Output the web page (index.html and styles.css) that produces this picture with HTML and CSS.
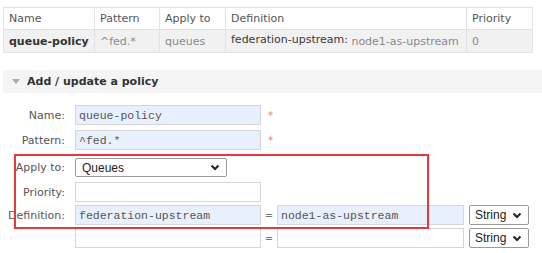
FILE: index.html
```html
<!DOCTYPE html>
<html lang="en">
<head>
  <meta charset="UTF-8" />
  <title>Policies</title>
  <link rel="stylesheet" href="styles.css">
</head>
<body>
  <table class="list">
    <thead>
      <tr>
        <th class="c-name">Name</th>
        <th class="c-pattern">Pattern</th>
        <th class="c-apply">Apply to</th>
        <th class="c-def">Definition</th>
        <th class="c-prio">Priority</th>
      </tr>
    </thead>
    <tbody>
      <tr>
        <td class="c-name"><b>queue-policy</b></td>
        <td class="c-pattern muted">^fed.*</td>
        <td class="c-apply muted">queues</td>
        <td class="c-def"><span class="key">federation-upstream:</span> <span class="val">node1-as-upstream</span></td>
        <td class="c-prio muted">0</td>
      </tr>
    </tbody>
  </table>

  <div class="section">
    <h2><span class="tri"></span>Add / update a policy</h2>
  </div>

  <div class="form">
    <div class="row r-name">
      <label>Name:</label>
      <input class="mono filled" type="text" value="queue-policy">
      <span class="req">*</span>
    </div>
    <div class="row r-pattern">
      <label>Pattern:</label>
      <input class="mono filled" type="text" value="^fed.*">
      <span class="req">*</span>
    </div>
    <div class="row r-apply">
      <label>Apply to:</label>
      <select class="apply">
        <option>Queues</option>
      </select>
    </div>
    <div class="row r-prio">
      <label>Priority:</label>
      <input type="text">
    </div>
    <div class="row r-def">
      <label>Definition:</label>
      <input class="mono filled" type="text" value="federation-upstream">
      <span class="eq">=</span>
      <input class="mono filled" type="text" value="node1-as-upstream">
      <select class="type"><option>String</option></select>
    </div>
    <div class="row">
      <label></label>
      <input type="text">
      <span class="eq">=</span>
      <input type="text">
      <select class="type"><option>String</option></select>
    </div>

    <!-- annotation box -->
    <div class="mark"></div>
  </div>
</body>
</html>
```

FILE: styles.css
```css
body {
  margin: 0;
  font-family: "DejaVu Sans", Verdana, sans-serif;
  font-size: 11px;
  color: #444;
  background: #fff;
}
.list {
  margin: 7px 0 0 3px;
  width: 524px;
  border-collapse: collapse;
  table-layout: fixed;
}
.list th, .list td {
  border: 1px solid #e2e2e2;
  text-align: left;
  padding: 0 5px;
  white-space: nowrap;
  overflow: hidden;
}
.list th {
  font-weight: normal;
  color: #555;
  height: 21px;
  background: #fff;
}
.list td {
  height: 22px;
  background: #f1f1f1;
  color: #333;
}
.c-name { width: 80px; }
.c-pattern { width: 54px; }
.c-apply { width: 55px; }
.c-def { width: 230px; }
.c-prio { width: 55px; }
.list b {
  font-weight: bold;
  color: #333;
}
.list td.muted,
.list .val {
  color: #8a8a8a;
}
.key {
  color: #3a3a3a;
  position: relative;
  top: -2px;
}
.section {
  margin: 17px 0 0 3px;
  background: #f5f5f5;
  height: 23px;
}
.section h2 {
  margin: 0;
  font-size: 11px;
  font-weight: bold;
  color: #333;
  line-height: 23px;
  padding-left: 9px;
  display: flex;
  align-items: center;
}
.tri {
  width: 0;
  height: 0;
  border-left: 4px solid transparent;
  border-right: 4px solid transparent;
  border-top: 5px solid #aaa;
  margin-right: 7px;
}
.form {
  position: relative;
  margin-top: 12px;
}
.row {
  display: flex;
  align-items: center;
  height: 20px;
  margin-bottom: 3px;
}
.r-name { margin-bottom: 5px; }
.r-pattern { margin-bottom: 8px; }
.r-apply { height: 19px; margin-bottom: 5px; }
.row label {
  width: 65px;
  margin-right: 10px;
  color: #555;
  flex: none;
  white-space: nowrap;
  display: flex;
  justify-content: flex-end;
}
.row input {
  box-sizing: border-box;
  width: 186px;
  height: 20px;
  border: 1px solid #d6d6d6;
  background: #fff;
  margin: 0;
  padding: 0 3px;
  font-size: 11.5px;
  color: #555;
  flex: none;
}
.mono {
  font-family: "Liberation Mono", "Courier New", monospace;
}
.filled {
  background: #e8f0fe !important;
}
.req {
  color: #e08080;
  margin-left: 7px;
  font-size: 10px;
}
.eq {
  width: 16px;
  text-align: center;
  color: #777;
  font-size: 10px;
}
.row input + .eq + input {
  width: 187px;
}
.apply, .type {
  appearance: none;
  -webkit-appearance: none;
  box-sizing: border-box;
  height: 20px;
  margin: 0;
  padding: 0 0 0 6px;
  font-family: "Liberation Sans", Arial, sans-serif;
  font-size: 12px;
  color: #222;
  border: 1px solid #9a9a9a;
  border-radius: 2px;
  background: #fff url("data:image/svg+xml;utf8,<svg xmlns='http://www.w3.org/2000/svg' width='10' height='7' viewBox='0 0 10 7'><path d='M1.5 1.5 L5 5 L8.5 1.5' fill='none' stroke='%23222' stroke-width='2'/></svg>") no-repeat right 6px center;
  flex: none;
}
.apply {
  width: 152px;
  height: 19px;
}
.type {
  width: 60px;
  margin-left: 5px;
  padding-left: 5px;
}
.mark {
  position: absolute;
  left: 14px;
  top: 49px;
  width: 411px;
  height: 71px;
  border: 2px solid #e8383d;
  pointer-events: none;
}
```
